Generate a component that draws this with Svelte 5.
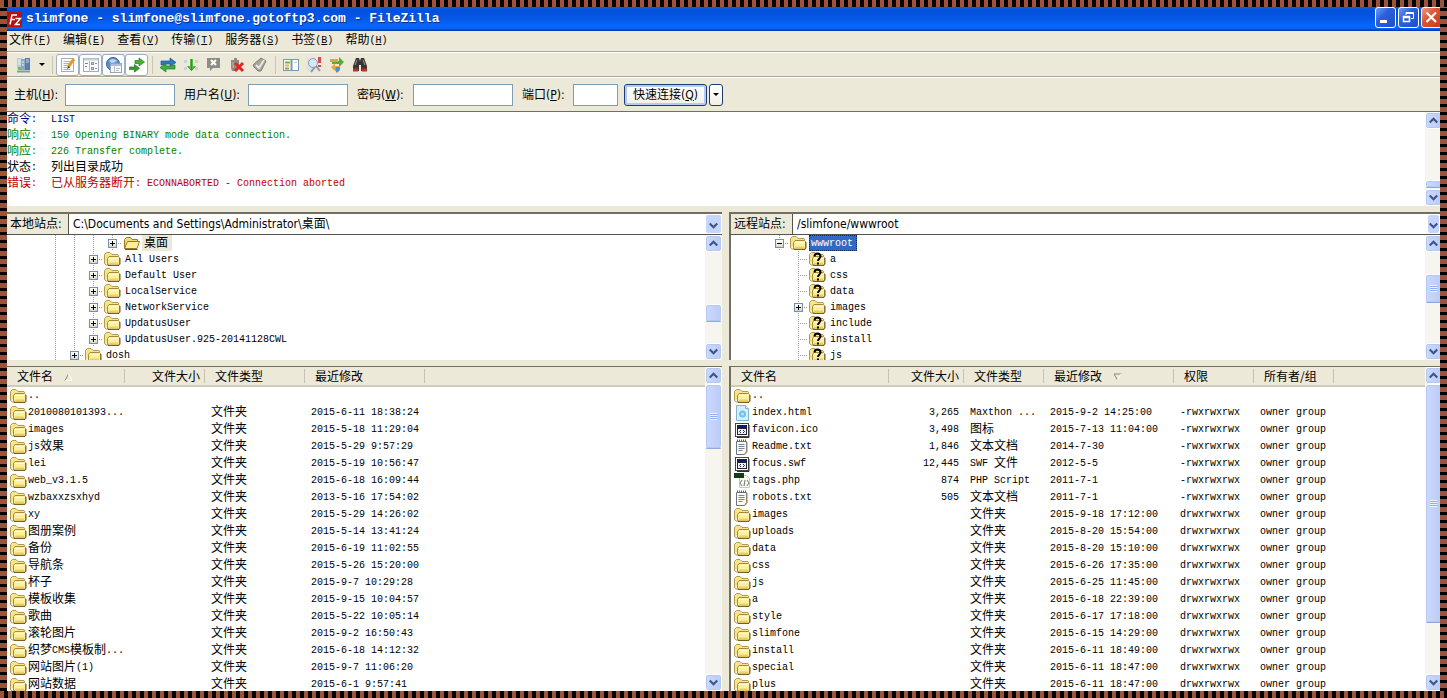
<script lang="ts">
  type FileRow = {
    name: string;
    icon?: string;
    size?: string;
    type?: string;
    modified?: string;
    perms?: string;
    owner?: string;
  };

  type TreeNode = {
    name: string;
    level: number;
    icon?: string;
    toggle?: string;
    state?: string;
  };

  const menus = [
    { label: '文件', key: 'F' },
    { label: '编辑', key: 'E' },
    { label: '查看', key: 'V' },
    { label: '传输', key: 'T' },
    { label: '服务器', key: 'S' },
    { label: '书签', key: 'B' },
    { label: '帮助', key: 'H' }
  ];

  const fields = [
    { id: 'host', label: '主机', key: 'H', labelWidth: 51, width: 110 },
    { id: 'user', label: '用户名', key: 'U', labelWidth: 64, width: 100 },
    { id: 'pass', label: '密码', key: 'W', labelWidth: 56, width: 100 },
    { id: 'port', label: '端口', key: 'P', labelWidth: 51, width: 45 }
  ];

  const log = [
    { kind: 'command', label: '命令:', text: 'LIST' },
    { kind: 'response', label: '响应:', text: '150 Opening BINARY mode data connection.' },
    { kind: 'response', label: '响应:', text: '226 Transfer complete.' },
    { kind: 'status', label: '状态:', text: '列出目录成功' },
    { kind: 'error', label: '错误:', text: '已从服务器断开: ECONNABORTED - Connection aborted' }
  ];

  const localTree: TreeNode[] = [
    { name: '桌面', level: 3, toggle: '+', icon: 'open', state: 'current' },
    { name: 'All Users', level: 2, toggle: '+' },
    { name: 'Default User', level: 2, toggle: '+' },
    { name: 'LocalService', level: 2, toggle: '+' },
    { name: 'NetworkService', level: 2, toggle: '+' },
    { name: 'UpdatusUser', level: 2, toggle: '+' },
    { name: 'UpdatusUser.925-20141128CWL', level: 2, toggle: '+' },
    { name: 'dosh', level: 1, toggle: '+' }
  ];

  const remoteTree: TreeNode[] = [
    { name: 'wwwroot', level: 0, toggle: '-', state: 'selected' },
    { name: 'a', level: 1, icon: 'unknown' },
    { name: 'css', level: 1, icon: 'unknown' },
    { name: 'data', level: 1, icon: 'unknown' },
    { name: 'images', level: 1, toggle: '+' },
    { name: 'include', level: 1, icon: 'unknown' },
    { name: 'install', level: 1, icon: 'unknown' },
    { name: 'js', level: 1, icon: 'unknown' }
  ];

  const localColumns = [
    { title: '文件名', width: 118, sort: 'asc' },
    { title: '文件大小', width: 80, right: true },
    { title: '文件类型', width: 100 },
    { title: '最近修改', width: 120 }
  ];

  const remoteColumns = [
    { title: '文件名', width: 158 },
    { title: '文件大小', width: 75, right: true },
    { title: '文件类型', width: 80 },
    { title: '最近修改', width: 130, sort: 'desc' },
    { title: '权限', width: 80 },
    { title: '所有者/组', width: 80 }
  ];

  const localFiles: FileRow[] = [
    { name: '..' },
    ...[
      ['2010080101393...', '2015-6-11 18:38:24'],
      ['images', '2015-5-18 11:29:04'],
      ['js效果', '2015-5-29 9:57:29'],
      ['lei', '2015-5-19 10:56:47'],
      ['web_v3.1.5', '2015-6-18 16:09:44'],
      ['wzbaxxzsxhyd', '2013-5-16 17:54:02'],
      ['xy', '2015-5-29 14:26:02'],
      ['图册案例', '2015-5-14 13:41:24'],
      ['备份', '2015-6-19 11:02:55'],
      ['导航条', '2015-5-26 15:20:00'],
      ['杯子', '2015-9-7 10:29:28'],
      ['模板收集', '2015-9-15 10:04:57'],
      ['歌曲', '2015-5-22 10:05:14'],
      ['滚轮图片', '2015-9-2 16:50:43'],
      ['织梦CMS模板制...', '2015-6-18 14:12:32'],
      ['网站图片(1)', '2015-9-7 11:06:20'],
      ['网站数据', '2015-6-1 9:57:41']
    ].map(([name, modified]) => ({ name, modified, type: '文件夹' }))
  ];

  const remoteFiles: FileRow[] = [
    { name: '..' },
    ...[
      ['index.html', 'html', '3,265', 'Maxthon ...', '2015-9-2 14:25:00'],
      ['favicon.ico', 'app', '3,498', '图标', '2015-7-13 11:04:00'],
      ['Readme.txt', 'text', '1,846', '文本文档', '2014-7-30'],
      ['focus.swf', 'app', '12,445', 'SWF 文件', '2012-5-5'],
      ['tags.php', 'php', '874', 'PHP Script', '2011-7-1'],
      ['robots.txt', 'text', '505', '文本文档', '2011-7-1']
    ].map(([name, icon, size, type, modified]) => ({
      name, icon, size, type, modified, perms: '-rwxrwxrwx', owner: 'owner group'
    })),
    ...[
      ['images', '2015-9-18 17:12:00'],
      ['uploads', '2015-8-20 15:54:00'],
      ['data', '2015-8-20 15:10:00'],
      ['css', '2015-6-26 17:35:00'],
      ['js', '2015-6-25 11:45:00'],
      ['a', '2015-6-18 22:39:00'],
      ['style', '2015-6-17 17:18:00'],
      ['slimfone', '2015-6-15 14:29:00'],
      ['install', '2015-6-11 18:49:00'],
      ['special', '2015-6-11 18:47:00'],
      ['plus', '2015-6-11 18:47:00']
    ].map(([name, modified]) => ({
      name, modified, type: '文件夹', perms: 'drwxrwxrwx', owner: 'owner group'
    }))
  ];

  let views = $state([
    { icon: 'log', title: '消息日志', on: true },
    { icon: 'tree', title: '本地目录树', on: true },
    { icon: 'remote', title: '远程目录树', on: true },
    { icon: 'queue', title: '传输队列', on: true }
  ]);

  const actions = [
    { icon: 'refresh', title: '刷新' },
    { icon: 'process', title: '处理队列' },
    { icon: 'cancel', title: '取消' },
    { icon: 'disconnect', title: '断开' },
    { icon: 'reconnect', title: '重新连接' }
  ];

  const tools = [
    { icon: 'filter', title: '过滤' },
    { icon: 'compare', title: '目录对比' },
    { icon: 'sync', title: '同步浏览' },
    { icon: 'find', title: '搜索' }
  ];

  // CJK glyphs are set at twice the width of a latin character
  function runs(text: string) {
    return (text.match(/[\u2e80-\uffef]+|[^\u2e80-\uffef]+/g) ?? []).map((part) => ({
      part,
      wide: /[\u2e80-\uffef]/.test(part)
    }));
  }
</script>

{#snippet mixed(text: string)}
  {#each runs(text) as run}{#if run.wide}<span class="wide">{run.part}</span>{:else}{run.part}{/if}{/each}
{/snippet}

{#snippet fileIcon(kind = 'folder')}
  <svg class="file-icon" width="17" height="16" viewBox="0 0 17 16" aria-hidden="true">
    {#if kind === 'html'}
      <path d="M2.500 .5h9l3 3v12h-12z" fill="#d8effa" stroke="#7fb4d2" />
      <path d="M11.500 .5v3h3" fill="#fff" stroke="#7fb4d2" />
      <circle cx="8.500" cy="9" r="3.500" fill="#74c0ea" />
      <circle cx="8.500" cy="9" r="1.500" fill="#b9e2f6" />
    {:else if kind === 'app'}
      <rect x="1.500" y="1.500" width="13" height="13" fill="#fff" stroke="#444" />
      <path d="M15 3v12.500H3" fill="none" stroke="#333" />
      <rect x="3" y="3" width="10" height="3" fill="#14186c" />
      <rect x="3.500" y="6.500" width="9" height="6" fill="#f2f2f2" stroke="#223" />
      <path d="M7 8l-1.500 1.500L7 11M9 8l1.500 1.500L9 11" fill="none" stroke="#14186c" />
    {:else if kind === 'text'}
      <path d="M2.500 2.500h10v10l-2 3h-8z" fill="#fbfaf0" stroke="#6c7480" />
      <path d="M3 1.500h10" stroke="#56617a" stroke-width="2" stroke-dasharray="1 1" />
      <path d="M4.500 5.500h6M4.500 7.500h6M4.500 9.500h6M4.500 11.500h4" stroke="#7088a8" />
      <path d="M13 3v10l-2 2.500" fill="none" stroke="#b08a58" />
    {:else if kind === 'php'}
      <path d="M5.500 2.500h7l3 3v9h-10z" fill="#f6f8f2" stroke="#c4cabc" />
      <rect x="0" y="0" width="10" height="5" fill="#123c12" />
      <path d="M8 7l-2 3 2 3M13 7l2 3-2 3M11 7l-1 6" fill="none" stroke="#6f7a6f" />
    {:else if kind === 'open'}
      <path d="M1.500 13.500v-9l2-2h4l1.500 2h5.500v3" fill="#f3dc76" stroke="#9a7a22" />
      <path d="M1.500 13.500l3-7h12l-2.500 7z" fill="#ffef9a" stroke="#9a7a22" />
      <path d="M2 14.500h12.500" stroke="#6b5518" />
    {:else}
      <path d="M.5 12.500v-9l2-2h3.500l2 2h6l1 1.500" fill="#f7e48c" stroke="#b39a4c" />
      <path d="M3.500 13.500v-6l1.500-2h9.500l1 1v6.500l-1 1h-9.500z" fill="#fdf09c" stroke="#a98b36" />
      <path d="M.5 12.500l2 1.500h2" fill="none" stroke="#a98b36" />
      <path d="M5 7.500h9" stroke="#fffbd8" />
      <path d="M5 12.500h9" stroke="#ead064" stroke-width="2" />
      <path d="M4 14.500h11l1-1.500v-6" fill="none" stroke="#75602a" />
      {#if kind === 'unknown'}
        <path d="M5.500 5.500c0-4 6-4 6 0 0 2-2.500 2-2.500 4.500M9 11.500v2" fill="none" stroke="#000" stroke-width="2" />
      {/if}
    {/if}
  </svg>
{/snippet}

{#snippet toolIcon(kind: string)}
  <svg width="16" height="16" viewBox="0 0 16 16" aria-hidden="true">
    {#if kind === 'site'}
      <rect x="1" y="1" width="5" height="11" fill="#b9cbd9" />
      <rect x="5" y="2" width="4" height="11" fill="#8ba8bf" />
      <path d="M2 3h3M2 5h3M2 7h3M6 5h2M6 8h2" stroke="#eef4f8" />
      <rect x="9" y="1" width="5" height="12" fill="#5580ad" />
      <path d="M10 3h3M10 5h3" stroke="#c4daee" />
      <path d="M1 14.500h13" stroke="#8b979c" stroke-width="2" />
      <rect x="2" y="10" width="3" height="3" fill="#7fb47a" />
    {:else if kind === 'log'}
      <rect x="1.500" y="1.500" width="12" height="13" fill="#fdfdfd" stroke="#a9adb5" />
      <path d="M3.500 4.500h7M3.500 6.500h6M3.500 8.500h4M3.500 10.500h4M3.500 12.500h7" stroke="#a9b3c4" />
      <path d="M14 2l-6 8" stroke="#e29a28" stroke-width="3" />
      <path d="M8.500 9l-1.500 3 3-1.500z" fill="#3c3428" />
    {:else if kind === 'tree'}
      <rect x=".5" y="1.500" width="15" height="13" fill="#fafafa" stroke="#a3acb9" />
      <path d="M1 2.500h14" stroke="#c7d0dc" stroke-width="2" />
      <path d="M6.500 4v10" stroke="#b4b8c0" />
      <path d="M2 6.500h3M2 9.500h2" stroke="#7d8694" />
      <rect x="8.500" y="5.500" width="2" height="2" fill="#cfd5dd" stroke="#8c95a3" />
      <rect x="8.500" y="10.500" width="2" height="2" fill="#cfd5dd" stroke="#8c95a3" />
      <path d="M12 6.500h2M12 11.500h2" stroke="#8c95a3" />
    {:else if kind === 'remote'}
      <circle cx="7" cy="7" r="6.500" fill="#5b8ecb" stroke="#355f9b" />
      <path d="M3 4c3-3 6-2 8 0-2 2-6 3-8 0z" fill="#b5d4f0" />
      <rect x="4.500" y="6.500" width="11" height="9" fill="#f8fafc" stroke="#96a3b5" />
      <path d="M5 8h10" stroke="#aebfd5" stroke-width="2" />
      <path d="M8.500 9v6M10 11.500h4M10 13.500h3" stroke="#b5bfca" />
    {:else if kind === 'queue'}
      <path d="M6 3.500h4V1l5.500 4-5.500 4V6.500H6z" fill="#43b52f" stroke="#267d1e" stroke-width=".7" />
      <path d="M.5 10h5V7.500l5 3.800-5 3.800v-2.500h-5z" fill="#349c32" stroke="#1d6e20" stroke-width=".7" />
    {:else if kind === 'refresh'}
      <path d="M1 8V4h9V1l6 4.500L10 9V7H4v1z" fill="#2f79bd" stroke="#1b5792" stroke-width=".7" />
      <path d="M15 8v4H6v3l-6-4.500L6 7v2h6V8z" fill="#41ae46" stroke="#217a2a" stroke-width=".7" />
    {:else if kind === 'process'}
      <path d="M1 3h3v3H1zM12 3h3v3h-3zM1 10h3v3H1zM12 10h3v3h-3z" fill="#c9d2da" />
      <path d="M7 2h3v7h3l-4.500 5L4 9h3z" fill="#58bd48" />
      <path d="M8.500 2v11M5 9.500l3.500 4 3.500-4" fill="none" stroke="#2b9330" />
    {:else if kind === 'cancel'}
      <path d="M1 1h13v10H7l-3 3v-3H1z" fill="#8d8d88" />
      <path d="M5 3l5 5M10 3L5 8" stroke="#fff" stroke-width="2" />
    {:else if kind === 'disconnect'}
      <path d="M2 3h3V1h3v2h2v9l-3 2H3l-1-3z" fill="#8b8b84" />
      <path d="M4 5v6M7 5v5" stroke="#b6b6ae" />
      <path d="M6 6l8 8M14 6l-8 8" stroke="#df2820" stroke-width="3" />
    {:else if kind === 'reconnect'}
      <path d="M2 7l7-6 5 3-5 10H6L1 9z" fill="#a5a59e" stroke="#7f7f79" />
      <path d="M4 8l3 3 5-8" fill="none" stroke="#e8e8e2" stroke-width="2" />
    {:else if kind === 'filter'}
      <rect x=".5" y="2.500" width="15" height="11" fill="#fdfefe" stroke="#7c98b4" />
      <path d="M8.500 2v12" stroke="#7c98b4" stroke-width="2" />
      <path d="M2 5.500h5M2 11.500h4" stroke="#7fae3c" stroke-width="2" />
      <path d="M2 8.500h4" stroke="#e8b23c" stroke-width="2" />
      <path d="M11 5.500h3" stroke="#b9cde0" />
    {:else if kind === 'compare'}
      <path d="M1 1h5v13H1z" fill="#dbe0e6" />
      <circle cx="7" cy="6" r="4.500" fill="#d3e8f8" stroke="#8a9db0" />
      <path d="M9 10l-4 5M10 9l4 5" stroke="#8998a8" stroke-width="2" />
      <path d="M13.500 0v6M13.500 8v2" stroke="#d94952" stroke-width="3" />
    {:else if kind === 'sync'}
      <path d="M3 4h7V0l5 5-5 5V7H3z" fill="#52ac38" />
      <path d="M1 2h8v3H1z" fill="#e4a239" />
      <path d="M11 9H6V6l-4 4.500L6 14v-2h5z" fill="#e0ab4a" />
      <path d="M7 10h4v3l-3 3-2-3z" fill="#4e91cf" />
    {:else if kind === 'find'}
      <path d="M4 1h3l1 3 1-3h3l3 8v5h-6V8H7v6H1V9z" fill="#3a3636" />
      <path d="M5 3L3 8M11 3l2 5" stroke="#9b9696" />
      <path d="M1 13h5M10 13h5" stroke="#c22f25" stroke-width="3" />
    {/if}
  </svg>
{/snippet}

{#snippet chevron(dir: string)}
  <svg width="9" height="7" viewBox="0 0 9 7" aria-hidden="true">
    <path d={dir === 'up' ? 'M.7 5.500l3.800-3.800 3.800 3.800' : 'M.7 1.500l3.800 3.800 3.800-3.800'} fill="none" stroke="#3d5687" stroke-width="2.200" />
  </svg>
{/snippet}

{#snippet scrollbar(before: number, thumb: number, after: number, edge = false)}
  <div class="scrollbar" class:edge>
    <button class="scroll-btn" aria-label="向上">{@render chevron('up')}</button>
    <div style="flex: {before} 1 0px"></div>
    <div class="thumb" style="flex: {thumb} 1 0px">
      {#if thumb > 20}<span class="grip"></span>{/if}
    </div>
    <div style="flex: {after} 1 0px"></div>
    <button class="scroll-btn" aria-label="向下">{@render chevron('down')}</button>
  </div>
{/snippet}

{#snippet tree(nodes: TreeNode[])}
  <ul class="tree">
    {#each nodes as node}
      <li>
        {#each Array(node.level) as _, i}
          {#if !(nodes === remoteTree && i === 0)}<span class="guide"></span>{:else}<span class="indent"></span>{/if}
        {/each}
        <span class="branch guide">
          {#if node.toggle}<button class="toggle" aria-label="展开"><i class:plus={node.toggle === '+'}></i></button>{/if}
        </span>
        {@render fileIcon(node.icon)}
        <span class="node {node.state ?? ''}">{@render mixed(node.name)}</span>
      </li>
    {/each}
  </ul>
{/snippet}

{#snippet sitePanel(label: string, path: string, id: string, edge: boolean)}
  <div class="site-bar">
    <label for={id}>{label}</label>
    <input {id} type="text" value={path} spellcheck="false" />
    <button class="combo" class:edge aria-label="历史路径">{@render chevron('down')}</button>
  </div>
{/snippet}

{#snippet fileTable(columns: any[], rows: FileRow[])}
  <table>
    <colgroup>
      {#each columns as col}<col style="width: {col.width}px" />{/each}
      <col />
    </colgroup>
    <thead>
      <tr>
        {#each columns as col}
          <th class:right={col.right}>
            {col.title}
            {#if col.sort}
              <svg class="sort" width="9" height="8" viewBox="0 0 9 8" aria-hidden="true">
                <path d={col.sort === 'asc' ? 'M1 7.500L4.500 1' : 'M8.500 1H1l3.500 6'} fill="none" stroke="#8b887b" />
                <path d={col.sort === 'asc' ? 'M4.500 1L8 7.500H1' : 'M8 1L4.500 7'} fill="none" stroke="#fff" />
              </svg>
            {/if}
          </th>
        {/each}
        <th class="rest"></th>
      </tr>
    </thead>
    <tbody>
      {#each rows as row}
        <tr>
          <td class="name"><div>{@render fileIcon(row.icon)}<span>{@render mixed(row.name)}</span></div></td>
          <td class="right">{row.size ?? ''}</td>
          <td>{@render mixed(row.type ?? '')}</td>
          <td>{row.modified ?? ''}</td>
          {#if columns.length > 4}
            <td>{row.perms ?? ''}</td>
            <td>{row.owner ?? ''}</td>
          {/if}
          <td></td>
        </tr>
      {/each}
    </tbody>
  </table>
{/snippet}

<div class="frame">
  <div class="window">
    <header class="titlebar">
      <svg width="15" height="15" viewBox="0 0 15 15" aria-hidden="true">
        <rect width="15" height="15" rx="1" fill="#b11212" />
        <path d="M3 12.500L5 3h5M4 7.500h4M8.500 6.500h5l-5 6h4.500" fill="none" stroke="#fff" stroke-width="1.500" />
      </svg>
      <h1>slimfone - slimfone@slimfone.gotoftp3.com - FileZilla</h1>
      <div class="window-buttons">
        <button aria-label="最小化"><svg width="19" height="19" viewBox="0 0 19 19"><path d="M4 13.500h7" stroke="#fff" stroke-width="3" /></svg></button>
        <button aria-label="还原"><svg width="19" height="19" viewBox="0 0 19 19"><path d="M7 7V4.500h7.500v6H12M7 5.500h7" fill="none" stroke="#fff" /><path d="M4.500 8.500h6v5h-6zM4 9.500h7" fill="none" stroke="#fff" stroke-width="1.500" /></svg></button>
        <button class="close" aria-label="关闭"><svg width="19" height="19" viewBox="0 0 19 19"><path d="M4.500 4.500l9.500 9.500M14 4.500L4.500 14" stroke="#fff" stroke-width="2.200" /></svg></button>
      </div>
    </header>

    <nav class="menubar">
      {#each menus as menu}
        <button><span class="wide">{menu.label}</span>(<u>{menu.key}</u>)</button>
      {/each}
    </nav>

    <div class="toolbar">
      <button class="tool" title="站点管理器">{@render toolIcon('site')}</button>
      <button class="drop" aria-label="站点列表"><i class="caret"></i></button>
      <span class="sep"></span>
      {#each views as view}
        <button class="tool" class:pressed={view.on} title={view.title} aria-pressed={view.on} onclick={() => (view.on = !view.on)}>
          {@render toolIcon(view.icon)}
        </button>
      {/each}
      <span class="sep"></span>
      {#each actions as action}
        <button class="tool" title={action.title}>{@render toolIcon(action.icon)}</button>
      {/each}
      <span class="sep"></span>
      {#each tools as tool}
        <button class="tool" title={tool.title}>{@render toolIcon(tool.icon)}</button>
      {/each}
    </div>

    <form class="quickconnect" onsubmit={(e) => e.preventDefault()}>
      {#each fields as field}
        <div class="field">
          <label for={field.id} style="width: {field.labelWidth}px">{field.label}(<u>{field.key}</u>):</label>
          <input id={field.id} type={field.id === 'pass' ? 'password' : 'text'} style="width: {field.width}px" />
        </div>
      {/each}
      <div class="connect">
        <button class="connect-btn">快速连接(<u>Q</u>)</button>
        <button class="connect-drop" type="button" aria-label="历史连接"><i class="caret"></i></button>
      </div>
    </form>

    <section class="log">
      <div class="log-lines">
        {#each log as line}
          <p class={line.kind}><span class="log-label">{@render mixed(line.label)}</span><span>{@render mixed(line.text)}</span></p>
        {/each}
      </div>
      {@render scrollbar(52, 6, 1, true)}
    </section>

    <main>
      <section class="pane">
        {@render sitePanel('本地站点:', 'C:\\Documents and Settings\\Administrator\\桌面\\', 'local-path', false)}
        <div class="tree-view">
          {@render tree(localTree)}
          {@render scrollbar(53, 16, 21)}
        </div>
        <div class="list-view">
          <div class="list">{@render fileTable(localColumns, localFiles)}</div>
          {@render scrollbar(0, 63, 227)}
        </div>
      </section>
      <section class="pane remote">
        {@render sitePanel('远程站点:', '/slimfone/wwwroot', 'remote-path', true)}
        <div class="tree-view">
          {@render tree(remoteTree)}
          {@render scrollbar(22, 28, 40, true)}
        </div>
        <div class="list-view">
          <div class="list">{@render fileTable(remoteColumns, remoteFiles)}</div>
          {@render scrollbar(0, 239, 51, true)}
        </div>
      </section>
    </main>
  </div>
</div>

<style>
  :global(body) {
    margin: 0;
  }

  .frame {
    --face: #ece9d8;
    --ui: 'DejaVu Sans Condensed', 'Noto Sans CJK SC', sans-serif;
    --mono: 'Liberation Mono', 'Noto Sans CJK SC', monospace;
    box-sizing: border-box;
    height: 100vh;
    padding: 7px;
    background:
      repeating-linear-gradient(90deg, #9d5337 0 4px, #000 4px 8px) top / 100% 7px no-repeat,
      repeating-linear-gradient(90deg, #9d5337 0 4px, #000 4px 8px) bottom / 100% 7px no-repeat,
      repeating-linear-gradient(#000 0 3px, #9d5337 3px 8px);
    font: 10px/16px var(--mono);
    color: #000;
  }

  .window {
    display: flex;
    flex-direction: column;
    height: 100%;
    overflow: hidden;
    background: var(--face);
  }

  .wide {
    font-size: 12px;
    font-family: 'Noto Sans CJK SC', sans-serif;
    line-height: 1;
    vertical-align: -1px;
  }

  button {
    padding: 0;
    border: 0;
    background: none;
    font: inherit;
    color: inherit;
  }

  .titlebar {
    display: flex;
    align-items: center;
    flex: none;
    height: 24px;
    overflow: hidden;
    background: linear-gradient(#0a5fe8, #0450dc 15%, #0558e6 50%, #0668fb 80%, #0462f2 92%, #003cae 96%);
  }

  .titlebar > svg {
    flex: none;
  }

  h1 {
    flex: 1;
    margin: 0 0 0 4px;
    font: bold 13px/20px var(--mono);
    color: #fff;
    text-shadow: 1px 1px #0a2f8c;
  }

  .window-buttons {
    display: flex;
    align-self: flex-start;
    gap: 2px;
    margin-right: -2px;
  }

  .window-buttons button {
    display: grid;
    width: 21px;
    height: 21px;
    border: 1px solid #fff;
    border-radius: 3px;
    background: linear-gradient(135deg, #6f9df4, #2a5fdd 40%, #1f50cc);
  }

  .window-buttons .close {
    background: linear-gradient(135deg, #ee9d85, #dc5633 40%, #c53c16);
  }

  .menubar {
    display: flex;
    align-items: center;
    gap: 12px;
    flex: none;
    height: 20px;
    padding-left: 2px;
    border-bottom: 1px solid #aca899;
  }

  .toolbar {
    display: flex;
    align-items: center;
    flex: none;
    height: 23px;
    padding-left: 5px;
    border-top: 1px solid #fff;
    border-bottom: 1px solid #aca899;
  }

  .tool {
    display: flex;
    align-items: center;
    justify-content: center;
    box-sizing: border-box;
    width: 23px;
    height: 22px;
  }

  .pressed {
    border: 1px solid #9dafc0;
    border-radius: 3px;
    background: #fff;
  }

  .drop {
    display: flex;
    justify-content: center;
    width: 13px;
  }

  .caret {
    border: 3px solid transparent;
    border-top: 3px solid #000;
    border-bottom: 0;
  }

  .sep {
    height: 18px;
    margin: 0 3px 0 4px;
    border-left: 1px solid #c9c6b5;
  }

  .quickconnect {
    display: flex;
    align-items: center;
    gap: 9px;
    flex: none;
    height: 33px;
    padding-left: 7px;
    border-top: 1px solid #fff;
    font: 12px/16px var(--ui);
  }

  .field {
    display: flex;
    align-items: center;
  }

  .field label {
    white-space: nowrap;
  }

  .field input {
    box-sizing: border-box;
    height: 22px;
    padding: 0 3px;
    border: 1px solid #7f9db9;
    background: #fff;
    font: inherit;
  }

  .connect {
    display: flex;
    gap: 2px;
    margin-left: -3px;
  }

  .connect-btn,
  .connect-drop {
    box-sizing: border-box;
    height: 22px;
    border: 1px solid #1b3c74;
    border-radius: 3px;
    background: linear-gradient(#fff, #f0efe7);
  }

  .connect-btn {
    width: 83px;
    box-shadow: inset 0 0 0 2px #b3cbf1;
    white-space: nowrap;
  }

  .connect-drop {
    display: flex;
    align-items: center;
    justify-content: center;
    width: 14px;
  }

  .log {
    display: flex;
    flex: none;
    height: 94px;
    border-top: 1px solid #716f64;
    background: #fff;
  }

  .log-lines {
    flex: 1;
  }

  .log p {
    display: flex;
    align-items: baseline;
    height: 16px;
    margin: 0;
    white-space: pre;
  }

  .log-label {
    width: 44px;
  }

  .command {
    color: #000080;
  }

  .response {
    color: #008000;
  }

  .error {
    color: #c00000;
  }

  main {
    display: grid;
    grid-template-columns: 715fr 711fr;
    column-gap: 7px;
    flex: 1;
    min-height: 0;
    padding-top: 6px;
  }

  .pane {
    display: flex;
    flex-direction: column;
    min-width: 0;
    min-height: 0;
  }

  .remote > div {
    border-left: 2px solid #716f64;
  }

  .site-bar {
    display: flex;
    flex: none;
    height: 20px;
    border-top: 2px solid #716f64;
    border-bottom: 1px solid #55534b;
    background: #fff;
    font: 12px/20px var(--ui);
  }

  .site-bar label {
    width: 58px;
    padding-left: 3px;
    border-right: 1px solid #55534b;
    background: var(--face);
    white-space: nowrap;
  }

  .site-bar input {
    flex: 1;
    min-width: 0;
    padding: 0 4px;
    border: 0;
    background: #fff;
    font: inherit;
  }

  .combo {
    width: 17px;
    border: 1px solid #fff;
    border-radius: 3px;
    background: #c6d5fb;
  }

  .combo.edge {
    width: 13px;
  }

  .tree-view {
    display: flex;
    flex: none;
    height: 125px;
    overflow: hidden;
    background: #fff;
  }

  .tree {
    flex: 1;
    margin: 0;
    padding: 0 0 0 39px;
    list-style: none;
  }

  .tree li {
    display: flex;
    align-items: center;
    height: 16px;
  }

  .indent,
  .guide {
    flex: none;
    width: 20px;
    height: 16px;
  }

  .indent,
  .guide:not(.branch) {
    width: 19px;
  }

  .guide {
    background: repeating-linear-gradient(#999 0 1px, transparent 1px 2px) 9px 0 / 1px 100% no-repeat;
  }

  .branch {
    display: flex;
    align-items: center;
    background:
      repeating-linear-gradient(#999 0 1px, transparent 1px 2px) 9px 0 / 1px 100% no-repeat,
      repeating-linear-gradient(90deg, #999 0 1px, transparent 1px 2px) 9px 8px / 10px 1px no-repeat;
  }

  .toggle {
    box-sizing: border-box;
    display: grid;
    width: 9px;
    height: 9px;
    margin-left: 5px;
    border: 1px solid #7b8ea8;
    background: linear-gradient(#fff, #d9d5c8);
  }

  .toggle i {
    width: 5px;
    height: 5px;
    margin: 1px;
    background: linear-gradient(#000, #000) 0 2px / 5px 1px no-repeat;
  }

  .toggle .plus {
    background:
      linear-gradient(#000, #000) 0 2px / 5px 1px no-repeat,
      linear-gradient(#000, #000) 2px 0 / 1px 5px no-repeat;
  }

  .file-icon {
    flex: none;
  }

  .node {
    height: 16px;
    margin-left: 2px;
    padding: 0 4px 0 2px;
    line-height: 18px;
    white-space: nowrap;
  }

  .current {
    background: var(--face);
  }

  .selected {
    background: #316ac5;
    outline: 1px dotted #0b2a63;
    outline-offset: -1px;
    color: #fff;
  }

  .list-view {
    display: flex;
    flex: 1;
    min-height: 0;
    margin-top: 6px;
    border-top: 1px solid #716f64;
    background: #fff;
  }

  .list {
    flex: 1;
    min-width: 0;
    overflow: hidden;
  }

  table {
    width: 100%;
    table-layout: fixed;
    border-collapse: separate;
    border-spacing: 0;
  }

  th {
    box-sizing: border-box;
    height: 20px;
    padding: 0 5px 0 10px;
    border-bottom: 2px solid #d0ccba;
    background: linear-gradient(#c5c2b2, #c5c2b2) right center / 1px 14px no-repeat, var(--face);
    font: 12px/18px 'Noto Sans CJK SC', sans-serif;
    text-align: left;
    white-space: nowrap;
  }

  .rest {
    background: var(--face);
  }

  .sort {
    margin-left: 8px;
  }

  td {
    height: 17px;
    padding: 0 0 0 6px;
    line-height: 17px;
    white-space: nowrap;
  }

  .right {
    padding: 0 5px 0 0;
    text-align: right;
  }

  .name {
    padding-left: 3px;
  }

  .name div {
    display: flex;
    align-items: center;
    gap: 1px;
    height: 17px;
  }

  .scrollbar {
    display: flex;
    flex-direction: column;
    flex: none;
    width: 17px;
    overflow: hidden;
    background: #f6f5f0;
  }

  .scrollbar.edge {
    width: 15px;
  }

  .scroll-btn,
  .thumb {
    box-sizing: border-box;
    display: grid;
    place-items: center;
    width: 17px;
    border: 1px solid #fff;
    border-radius: 3px;
    background: linear-gradient(90deg, #cbdafd, #bacbf6);
    box-shadow: inset 0 0 0 1px #b4c8f4;
  }

  .scroll-btn {
    flex: none;
    height: 17px;
  }

  .thumb {
    border-bottom-color: #8ea9de;
  }

  .grip {
    width: 7px;
    height: 7px;
    background: repeating-linear-gradient(#eef4fe 0 1px, #8cb0f8 1px 2px);
  }
</style>
